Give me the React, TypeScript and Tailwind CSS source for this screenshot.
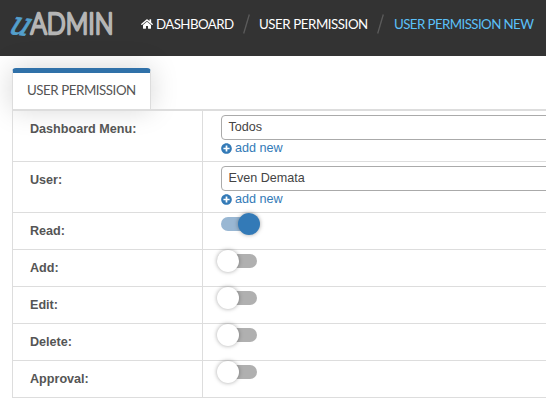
import { FaHome, FaPlusCircle } from "react-icons/fa";

function Logo() {
  return (
    <svg className="block h-14 w-[130px] shrink-0" viewBox="0 0 130 56" role="img" aria-label="uADMIN">
      <text
        x="0"
        y="0"
        transform="translate(6 33) rotate(8) skewX(-24)"
        textLength="20"
        lengthAdjust="spacingAndGlyphs"
        className="fill-[#539fcc] stroke-[#539fcc] stroke-[0.8] font-['DejaVu_Serif',serif] text-[33px]"
      >
        u
      </text>
      <text
        x="30.5"
        y="34.2"
        textLength="83"
        lengthAdjust="spacingAndGlyphs"
        strokeLinejoin="round"
        className="fill-[#b5b5b5] stroke-[#b5b5b5] stroke-[2.6] font-['Lato',sans-serif] text-[29px] font-light"
      >
        ADMIN
      </text>
    </svg>
  );
}

function Slash() {
  return (
    <svg className="h-5 w-[7px] shrink-0" viewBox="0 0 7 20">
      <path d="M6.3 0.5 0.7 19.5" className="stroke-[#5b5b5b] stroke-[1.3]" />
    </svg>
  );
}

function Label({ children }: { children: string }) {
  return (
    <div className="w-[190px] shrink-0 border-r border-[#ddd] pl-[17px] pt-[9px] font-bold leading-[18px] text-[#555]">
      {children}
    </div>
  );
}

function SelectRow({ label, value }: { label: string; value: string }) {
  return (
    <div className="flex h-[51px] border-b border-[#ddd]">
      <Label>{label}</Label>
      <div className="flex flex-1 flex-col pl-[18px] pt-1">
        <div className="h-[25px] w-[400px] rounded border border-[#aaa] pl-[6.5px] leading-[22px] text-[#444]">
          {value}
        </div>
        <a className="flex h-[16px] items-center gap-[3px] text-[#337ab7]">
          <FaPlusCircle className="size-[11px]" />
          <span className="leading-[16px]">add new</span>
        </a>
      </div>
    </div>
  );
}

function ToggleRow({ label, on = false }: { label: string; on?: boolean }) {
  return (
    <div className="flex h-[37px] border-b border-[#ddd]">
      <Label>{label}</Label>
      <div className="pl-[18px] pt-1">
        <div className={`relative h-[14px] w-9 rounded-full ${on ? "bg-[#99b7d3]" : "bg-[#b0b0b0]"}`}>
          <div
            className={`absolute -top-1 size-[22px] rounded-full shadow-[0_0_4px_rgba(0,0,0,0.35)] ${
              on ? "left-[17px] bg-[#337ab7]" : "-left-1 bg-white"
            }`}
          />
        </div>
      </div>
    </div>
  );
}

export default function App() {
  return (
    <div className="h-[404px] w-[546px] overflow-hidden bg-white font-['Liberation_Sans',Arial,sans-serif] text-[12.6px]">
      <header className="flex h-14 bg-[#333]">
        <Logo />
        <nav className="flex h-[48px] items-center whitespace-nowrap pl-[11px] font-['Lato',sans-serif] text-[13.3px] leading-5 text-white">
          <FaHome className="mr-[3px] size-3" />
          <span className="w-[79px] tracking-[-0.58px]">DASHBOARD</span>
          <span className="ml-[8px] flex"><Slash /></span>
          <span className="ml-[9px] w-[110px] tracking-[-0.44px]">USER PERMISSION</span>
          <span className="ml-[8px] flex"><Slash /></span>
          <span className="ml-[10px] w-[142px] tracking-[-0.58px] text-[#5bc0f8]">USER PERMISSION NEW</span>
        </nav>
      </header>
      <main className="pl-3 pt-3">
        <div className="h-[41px] w-[139px] whitespace-nowrap rounded-t border-x border-t-[5px] border-x-[#ddd] border-t-[#3071a9] pl-[14px] pt-[7px] font-['Lato',sans-serif] text-[13.3px] leading-5 tracking-[-0.44px] text-[#555] shadow-[0_0_28px_rgba(0,0,0,0.17)]">
          USER PERMISSION
        </div>
        <div className="border-l border-t-2 border-[#ddd]">
          <SelectRow label="Dashboard Menu:" value="Todos" />
          <SelectRow label="User:" value="Even Demata" />
          <ToggleRow label="Read:" on />
          <ToggleRow label="Add:" />
          <ToggleRow label="Edit:" />
          <ToggleRow label="Delete:" />
          <ToggleRow label="Approval:" />
        </div>
      </main>
    </div>
  );
}
